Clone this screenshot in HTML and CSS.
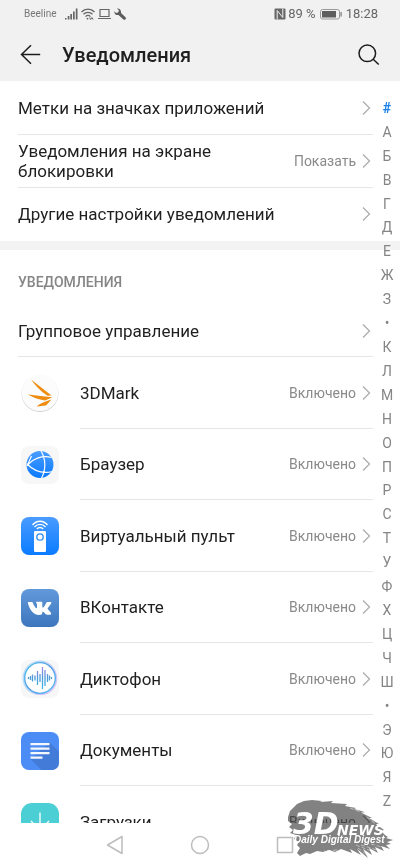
FILE: index.html
```html
<!DOCTYPE html>
<html lang="ru">
<head>
<meta charset="utf-8">
<meta name="viewport" content="width=device-width, initial-scale=1">
<title>Уведомления</title>
<link rel="stylesheet" href="styles.css">
</head>
<body>
<svg class="defs" aria-hidden="true">
  <defs>
    <linearGradient id="blue" x1="0" y1="0" x2="0" y2="1"><stop offset="0" stop-color="#4a9cff"/><stop offset="1" stop-color="#0b7bff"/></linearGradient>
    <linearGradient id="vk" x1="0" y1="0" x2="0" y2="1"><stop offset="0" stop-color="#6299db"/><stop offset="1" stop-color="#3d76bd"/></linearGradient>
    <linearGradient id="wave" x1="0" y1="0" x2="0" y2="1"><stop offset="0" stop-color="#a58ae6"/><stop offset=".5" stop-color="#4a9ad8"/><stop offset="1" stop-color="#3dbbe8"/></linearGradient>
    <linearGradient id="ring" x1="0" y1="0" x2="1" y2="1"><stop offset="0" stop-color="#4cc3ef"/><stop offset=".5" stop-color="#4a9be8"/><stop offset="1" stop-color="#58b9ef"/></linearGradient>
    <symbol id="chevron" viewBox="0 0 9 16"><path d="M1 1.5 7.5 8 1 14.5" fill="none" stroke="#adadad" stroke-width="1.3"/></symbol>
  </defs>
</svg>

<header class="header">
  <div class="status">
    <span class="carrier">Beeline</span>
    <svg class="signal" width="13" height="12" viewBox="0 0 13 12" fill="#666"><path d="M0 10h1.500v1.500H0zM2.700 8h1.700v3.500H2.700zM5.300 6H7v5.500H5.300zM8 3.500h1.700v8H8zM10.800 .5h1.700v11h-1.700z"/></svg>
    <svg width="14" height="12" viewBox="0 0 14 12" fill="none" stroke="#666" stroke-width="1.300"><path d="M.5 4C4 .2 10 .2 13.500 4M2.500 6.300c2.500-2.700 6.500-2.700 9 0M4.500 8.600c1.500-1.500 3.500-1.500 5 0"/><circle cx="6.500" cy="10.700" r=".9" fill="#666" stroke="none"/><path d="m8.500 9.500 1.200 2 1.200-2 1.200 2" stroke-width="1"/></svg>
    <svg width="13" height="12" viewBox="0 0 13 12" fill="none" stroke="#666" stroke-width="1.200"><path d="M2 1.500h9v7H2zM0 10.500h13"/></svg>
    <svg width="13" height="12" viewBox="0 0 13 12"><path d="M3 .6 5 2.600 4 4.400 2 5 .3 3.200C0 5.500 2 7.600 4.500 7L9.400 11.500Q10.500 12.200 11.500 11.300 12.500 10.200 11.500 9.200L7 5C7.500 2.200 5.500.2 3 .6" fill="#5c5c5c"/></svg>
    <span class="status-end">
      <svg width="12" height="12" viewBox="0 0 12 12"><path d="M1.500.5h9a1 1 0 0 1 1 1v9a1 1 0 0 1-1 1h-9a1 1 0 0 1-1-1v-9a1 1 0 0 1 1-1" fill="#666"/><path d="M3.200 11.500V2.500L8.800 9.500V.5" fill="none" stroke="#f1f1f1" stroke-width="1"/></svg>
      <span class="percent">89 %</span>
      <svg class="battery" width="22" height="11" viewBox="0 0 22 11"><rect x=".5" y=".5" width="19" height="9.500" rx="2" fill="none" stroke="#999"/><path d="M2 2h14v6.500H2z" fill="#5e5e5e"/><path d="M20.500 3h1.200v4.500h-1.200z" fill="#777"/></svg>
      <span class="time">18:28</span>
    </span>
  </div>
  <div class="appbar">
    <button class="icon-button" type="button" aria-label="Назад"><svg width="22" height="22" viewBox="0 0 22 22" fill="none" stroke="#1c1c1c" stroke-width="1.500"><path d="M11 1.200 1.500 10.500l9.500 9.300M1.500 10.500h18.700"/></svg></button>
    <h1 class="title">Уведомления</h1>
    <button class="icon-button" type="button" aria-label="Поиск"><svg width="22" height="22" viewBox="0 0 22 22" fill="none" stroke="#1c1c1c" stroke-width="1.500"><circle cx="9.300" cy="9.300" r="8.300"/><path d="m15.200 15.200 5.500 5.300"/></svg></button>
  </div>
</header>

<main class="content">
  <div class="group">
    <a class="row" href="#"><span class="label">Метки на значках приложений</span><svg class="chevron"><use href="#chevron"/></svg></a>
    <a class="row" href="#"><span class="label">Уведомления на экране блокировки</span><span class="value">Показать</span><svg class="chevron"><use href="#chevron"/></svg></a>
    <a class="row" href="#"><span class="label">Другие настройки уведомлений</span><svg class="chevron"><use href="#chevron"/></svg></a>
  </div>
  <section class="notifications">
    <h2 class="section-title">УВЕДОМЛЕНИЯ</h2>
    <a class="row manage" href="#"><span class="label">Групповое управление</span><svg class="chevron"><use href="#chevron"/></svg></a>
    <ul class="apps">
      <li class="app">
        <svg class="app-icon" viewBox="0 0 38 38"><circle cx="19" cy="19.500" r="18.500" fill="#cfcfcf"/><circle cx="19" cy="18.700" r="18.400" fill="#fcfcfc"/><path d="M10 5.500 30.500 21.500 26.500 21.800C19.500 17 14.500 12 10 5.500M7 20.500 24 22.500 31.500 23.200 24 26.500C17 25.500 12 23.500 7 20.500M30.500 25.500 25 31.500 15.500 32.500C19.500 29 24 27.500 30.500 25.500" fill="#ee8c10"/></svg>
        <a class="app-link" href="#"><span class="label">3DMark</span><span class="value">Включено</span><svg class="chevron"><use href="#chevron"/></svg></a>
      </li>
      <li class="app">
        <svg class="app-icon" viewBox="0 0 38 38"><rect width="38" height="38" rx="8" fill="#f7f7f7"/><circle cx="19" cy="18.500" r="13.500" fill="url(#blue)"/><path d="M6 20C12 12 22 9 30.500 11.500M6 18C13 25 22 28 31.500 25.500M20 5C25 13 25 24 20.500 32M6 20 10.500 10" fill="none" stroke="#fff" stroke-width="1.200"/></svg>
        <a class="app-link" href="#"><span class="label">Браузер</span><span class="value">Включено</span><svg class="chevron"><use href="#chevron"/></svg></a>
      </li>
      <li class="app">
        <svg class="app-icon" viewBox="0 0 38 38"><rect width="38" height="38" rx="8" fill="url(#blue)"/><rect x="13" y="14" width="12" height="21" rx="1.200" fill="#fff"/><circle cx="19" cy="20" r="3.200" fill="#fff" stroke="#2d8cf2" stroke-width="1.300"/><path d="M11.500 8C15.500 3 22.500 3 26.500 8M13.500 10c3-3.500 8-3.500 11 0M15.800 12c1.800-2 4.600-2 6.400 0" fill="none" stroke="#fff" stroke-width="1.300"/></svg>
        <a class="app-link" href="#"><span class="label">Виртуальный пульт</span><span class="value">Включено</span><svg class="chevron"><use href="#chevron"/></svg></a>
      </li>
      <li class="app">
        <svg class="app-icon" viewBox="0 0 38 38"><rect width="38" height="38" rx="8" fill="url(#vk)"/><path d="M7.500 13h3.200c.7 0 .9.300 1.200 1 1 2.600 2.800 5.300 3.500 5.300.5 0 .6-.4.600-1.200v-2.600c0-1.300-1-1.500-1-2 0-.3.300-.8 1-.8h4.300c.8 0 1 .4 1 1v4c0 .7.300.9.600.9.900 0 2.300-2.700 3.400-4.900.2-.5.500-.8 1.100-.8h3c1 0 1.200.5.900 1.200-.7 1.600-3.400 5-3.400 5-.3.500-.4.700 0 1.200 1.200 1.300 2.600 2.600 3.200 4 .3.800 0 1.400-1 1.400H26c-1.800 0-2.700-3-4.100-3-.6 0-.7.400-.7 1.200v.7c0 .8-.3 1.200-1.600 1.200C12.500 26.800 8.500 20 7 14.400c-.2-.8-.2-1.400.5-1.400" fill="#fff"/></svg>
        <a class="app-link" href="#"><span class="label">ВКонтакте</span><span class="value">Включено</span><svg class="chevron"><use href="#chevron"/></svg></a>
      </li>
      <li class="app">
        <svg class="app-icon" viewBox="0 0 38 38"><rect width="38" height="38" rx="8" fill="#f7f7f7"/><ellipse cx="18.500" cy="18" rx="15.800" ry="16.300" fill="#fff" stroke="#b6dafa" stroke-width="2" transform="rotate(30 19 18)"/><ellipse cx="20" cy="18.500" rx="15.500" ry="16" fill="none" stroke="#d4c6f5" stroke-width="1.500"/><circle cx="19" cy="18" r="15.300" fill="#fff" stroke="url(#ring)" stroke-width="1.300"/><path d="M7.500 17v2M9.500 16v4M11.500 14.500v7M14 15.500v5M16.500 11v14M19 14v8M21.500 7v22M24 10v16M26.500 14v8M28.500 15.500v5M30.500 17v2" fill="none" stroke="url(#wave)" stroke-width="1.300"/></svg>
        <a class="app-link" href="#"><span class="label">Диктофон</span><span class="value">Включено</span><svg class="chevron"><use href="#chevron"/></svg></a>
      </li>
      <li class="app">
        <svg class="app-icon" viewBox="0 0 38 38"><rect width="38" height="38" rx="8" fill="#4b8cf5"/><path d="m28.500 10.500 9.500 9V30q0 8-8 8h-9.500L9.500 27z" fill="#437bd9"/><path d="M9.500 11h19v2.200h-19zM9.500 15.500h19v2.200h-19zM9.500 20h19v2.200h-19zM9.500 24.500h12v2.200h-12z" fill="#f3f6fc"/></svg>
        <a class="app-link" href="#"><span class="label">Документы</span><span class="value">Включено</span><svg class="chevron"><use href="#chevron"/></svg></a>
      </li>
      <li class="app">
        <svg class="app-icon" viewBox="0 0 38 38"><rect width="38" height="38" rx="11" fill="#4bced4"/><path d="M19 9.500v18M10 18l9 9.500 9-9.500" fill="none" stroke="#fff" stroke-width="1.300"/></svg>
        <a class="app-link" href="#"><span class="label">Загрузки</span><span class="value">Включено</span><svg class="chevron"><use href="#chevron"/></svg></a>
      </li>
    </ul>
  </section>
  <nav class="index" aria-label="Алфавитный указатель">
    <a class="current" href="#">#</a><a href="#">А</a><a href="#">Б</a><a href="#">В</a><a href="#">Г</a><a href="#">Д</a><a href="#">Е</a><a href="#">Ж</a><a href="#">З</a><a href="#">•</a><a href="#">К</a><a href="#">Л</a><a href="#">М</a><a href="#">Н</a><a href="#">О</a><a href="#">П</a><a href="#">Р</a><a href="#">С</a><a href="#">Т</a><a href="#">У</a><a href="#">Ф</a><a href="#">Х</a><a href="#">Ц</a><a href="#">Ч</a><a href="#">Ш</a><a href="#">•</a><a href="#">Э</a><a href="#">Ю</a><a href="#">Я</a><a href="#">Z</a>
  </nav>
</main>

<footer class="navbar">
  <button class="nav-button" type="button" aria-label="Назад"><svg width="20" height="20" viewBox="0 0 20 20"><path d="M17 1.500v17L2.500 10z"/></svg></button>
  <button class="nav-button" type="button" aria-label="Домой"><svg width="20" height="20" viewBox="0 0 20 20"><circle cx="10" cy="10" r="8.500"/></svg></button>
  <button class="nav-button" type="button" aria-label="Недавние"><svg width="20" height="20" viewBox="0 0 20 20"><path d="M2.500 2.500h15v15h-15z"/></svg></button>
</footer>

<svg class="watermark brush" width="112" height="62" viewBox="0 0 112 62" aria-hidden="true">
  <path d="M0 18 2 12 9 5 16 2 24 1 34 2 32 3 45 2 43 4 59 5 57 7 68 9 66 10 77 13 74 14 84 19 81 19 91 25 88 25 96 31 93 32 97 36 100 38 98 39 105 41 99 43 103 45 98 46 102 50 93 47 96 52 87 48 90 54 81 49 84 56 75 50 80 59 69 50 73 56 62 50 64 54 53 50 47 53 41 51 35 53 29 52 22 55 18 54 12 57 9 54 12 49 9 46 11 43 6 40 8 36 2 34 5 31 1 28 4 25 0 22z"/>
</svg>
<svg class="watermark mark" width="112" height="62" viewBox="0 0 112 62" role="img" aria-label="3DNews Daily Digital Digest">
  <path d="m62 9 16 6m-5-4 16 10m-10-3 14 11m-9-11 10 8M68 46l15 6m-10-6 16 5m-6-6 14 4M70 49l9 7m-30-5-13 1" fill="none" stroke="#fff" stroke-width=".8" stroke-dasharray="4 2" opacity=".6"/>
  <text class="mark-three" x="5" y="35">3D</text>
  <text class="mark-news" x="49" y="36">NEWS</text>
  <text class="mark-tag" x="6" y="44">Daily Digital Digest</text>
</svg>
</body>
</html>
```
FILE: styles.css
```css
* { box-sizing: border-box; }

body {
  margin: 0;
  height: 100vh;
  display: flex;
  flex-direction: column;
  position: relative;
  overflow: hidden;
  background: #fff;
  color: #1f1f1f;
  font-family: Roboto, "Noto Sans", sans-serif;
  font-size: 17px;
  line-height: 20px;
}

a { color: inherit; text-decoration: none; }
button { padding: 0; border: 0; background: none; }
svg { display: block; flex: none; }
.defs { position: absolute; width: 0; height: 0; }

.header { background: #f1f1f1; }

.status {
  display: flex;
  align-items: center;
  gap: 3px;
  height: 28px;
  padding: 0 22px 0 24px;
  color: #666;
}
.carrier { font-size: 10px; color: #777; }
.signal { margin-left: 5px; }
.status-end {
  display: flex;
  align-items: center;
  gap: 2px;
  margin-left: auto;
  font-size: 13px;
}
.battery { margin: 0 2px; }

.appbar {
  display: flex;
  align-items: center;
  height: 53px;
  padding: 0 20px;
}
.title {
  flex: 1;
  margin: 0 0 0 20px;
  font-size: 20px;
  font-weight: 500;
}

.content {
  flex: 1;
  min-height: 0;
  position: relative;
  overflow: hidden;
}

.group {
  padding: 0 27px 1px 18px;
  border-bottom: 9px solid #f3f3f3;
}
.row {
  display: flex;
  align-items: center;
  min-height: 53px;
}
.row + .row { border-top: 1px solid #e6e6e6; }
.label { flex: 1; }
.value {
  margin-left: 12px;
  color: #8a8a8a;
  font-size: 14px;
}
.chevron {
  width: 9px;
  height: 16px;
  margin: 0 2px 0 6px;
}

.notifications { padding: 0 27px 0 18px; }
.section-title {
  margin: 0;
  padding: 22px 0 14px;
  color: #858585;
  font-size: 14px;
  font-weight: 500;
}
.manage { border-bottom: 1px solid #e6e6e6; min-height: 51px; }

.apps { margin: 0; padding: 0; list-style: none; }
.app {
  display: flex;
  align-items: center;
  gap: 21px;
  height: 72px;
  padding-left: 3px;
}
.app:nth-child(even) { height: 71px; }
.app-icon { width: 38px; height: 38px; }
.app-link {
  flex: 1;
  display: flex;
  align-items: center;
  align-self: stretch;
  border-bottom: 1px solid #e6e6e6;
}

.index {
  position: absolute;
  top: 0;
  right: 0;
  bottom: 0;
  display: flex;
  flex-direction: column;
  width: 26px;
  padding: 15px 0 10px;
  color: #858585;
  font-size: 14px;
  text-align: center;
}
.index a {
  flex: 1;
  display: flex;
  align-items: center;
  justify-content: center;
}
.index .current { color: #1a83e8; font-weight: 700; }

.navbar {
  display: flex;
  justify-content: center;
  align-items: center;
  gap: 65px;
  height: 44px;
}
.nav-button svg { fill: none; stroke: #bdbdbd; stroke-width: 1.5; stroke-linejoin: round; }

.watermark {
  position: absolute;
  right: 0;
  bottom: 6px;
  pointer-events: none;
}
.brush { fill: #828282; mix-blend-mode: multiply; }
.mark text {
  fill: #fff;
  font-family: "DejaVu Sans", sans-serif;
  font-weight: 700;
  font-style: italic;
}
.mark .mark-three { font-size: 30px; }
.mark .mark-news { font-size: 14px; }
.mark .mark-tag { font-family: "Liberation Sans", sans-serif; font-size: 10px; }
```
